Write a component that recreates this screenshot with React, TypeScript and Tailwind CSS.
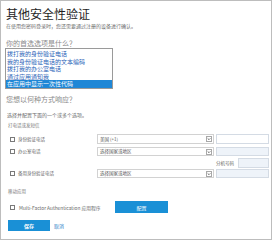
const options = [
  "拨打我的身份验证电话",
  "我的身份验证电话的文本编码",
  "拨打我的办公室电话",
  "通过应用通知我",
  "在应用中显示一次性代码",
];

function Checkbox() {
  return <span className="block w-[5px] h-[5px] border border-[#7a7a7a] bg-white shrink-0" />;
}

function Select({ text }: { text: string }) {
  return (
    <div className="w-[117px] h-full border border-[#d2d2d2] bg-white flex items-center justify-between pl-[2px] pr-[1px]">
      <span className="text-[4.5px] leading-[5px] text-[#555]">{text}</span>
      <svg width="6" height="6" viewBox="0 0 6 6">
        <rect x="0.5" y="0.5" width="5" height="5" fill="#fff" stroke="#a8a8a8" />
        <path d="M1.6 2.3 L3 3.7 L4.4 2.3" fill="none" stroke="#555" strokeWidth="0.8" />
      </svg>
    </div>
  );
}

function PhoneRow({ label, country, blank }: { label: string; country: string; blank?: boolean }) {
  return (
    <div className="flex items-center h-full">
      <div className="w-[91px] flex items-center pl-[4px]">
        <Checkbox />
        <span className="ml-[3px] text-[4.5px] leading-[5px] text-[#666]">{label}</span>
      </div>
      <Select text={country} />
      <div
        className={
          "ml-[2px] w-[53px] h-full border border-[#d4dbe4] " + (blank ? "bg-[#eef3f9]" : "bg-white")
        }
      />
    </div>
  );
}

export default function App() {
  return (
    <div className="w-[272px] h-[240px] border border-[#bdbdbd] bg-white overflow-hidden pl-[5px] font-['Noto_Sans_CJK_SC','Noto_Sans',sans-serif]">
      <div className="mt-[7px] text-[12px] leading-[12px] text-[#1e1e1e]">其他安全性验证</div>
      <div className="mt-[3px] text-[5px] leading-[6px] text-[#6a6a6a]">
        在使用您密码登录时，您还需要通过注册的设备进行确认。
      </div>

      <div className="mt-[10px] text-[7px] leading-[8px] text-[#8a8a8a]">你的首选选项是什么？</div>
      <div className="mt-[1px] -ml-px w-[108px] h-[41px] border border-[#9a9a9a] pt-[1px]">
        {options.map((o, i) => (
          <div
            key={o}
            className={
              "h-[7.5px] pl-[1px] text-[6px] leading-[7.5px] whitespace-nowrap " +
              (i === 4 ? "bg-[#1f87d6] text-white" : "text-[#2a63b8]")
            }
          >
            {o}
          </div>
        ))}
      </div>

      <div className="mt-[6px] text-[7px] leading-[8px] text-[#8a8a8a]">您想以何种方式响应？</div>
      <div className="mt-[9px] ml-[1px] text-[5px] leading-[6px] text-[#6a6a6a]">选择并配置下面的一个或多个选项。</div>
      <div className="mt-[4px] ml-[2px] text-[4.5px] leading-[6px] text-[#777]">打电话或发短信</div>

      <div className="mt-[6px] h-[10px]">
        <PhoneRow label="身份验证电话" country="美国 (+1)" />
      </div>
      <div className="mt-[3px] h-[9px]">
        <PhoneRow label="办公室电话" country="选择国家或地区" blank />
      </div>
      <div className="mt-[2px] h-[10px] flex items-center ml-[210px]">
        <span className="w-[22px] text-[4.5px] leading-[5px] text-[#666]">分机号码</span>
        <div className="w-[31px] h-full border border-[#d4dbe4] bg-[#eef3f9]" />
      </div>
      <div className="mt-[1px] h-[9px]">
        <PhoneRow label="备用身份验证电话" country="选择国家或地区" blank />
      </div>

      <div className="mt-[10px] ml-[2px] text-[4.5px] leading-[6px] text-[#777]">移动应用</div>
      <div className="mt-[7px] h-[12px] flex items-center">
        <div className="w-[109px] flex items-center pl-[4px]">
          <Checkbox />
          <span className="ml-[4px] text-[4.8px] leading-[5px] text-[#666] whitespace-nowrap">
            Multi-Factor Authentication 应用程序
          </span>
        </div>
        <button className="w-[53px] h-full bg-[#1a90d6] text-white text-[5px] leading-[5px]">配置</button>
      </div>

      <div className="mt-[7px] h-[11px] flex items-center ml-[2px]">
        <button className="w-[42px] h-full bg-[#1a90d6] text-white text-[5px] leading-[5px] font-bold">保存</button>
        <span className="ml-[4px] text-[5px] leading-[5px] text-[#2a7cc7]">取消</span>
      </div>
    </div>
  );
}
